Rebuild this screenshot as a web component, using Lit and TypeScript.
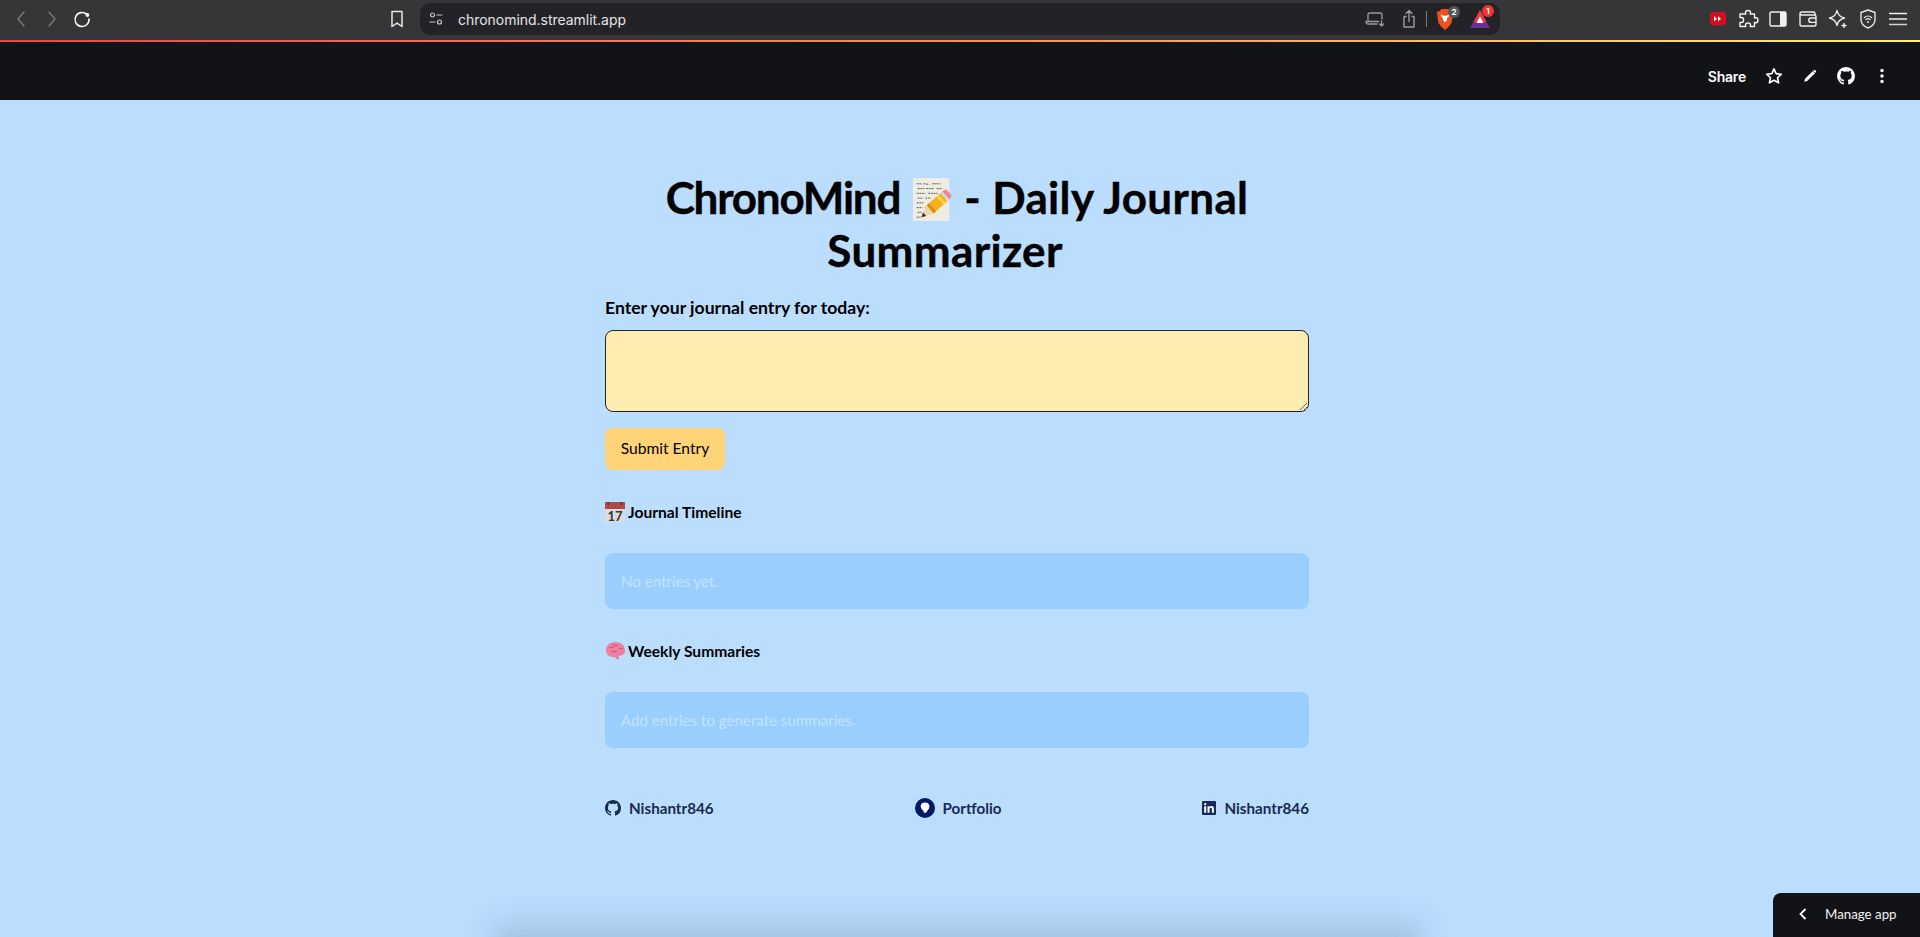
import { LitElement, html, css, svg } from "lit";
import { customElement } from "lit/decorators.js";

const githubPath = "M8 0C3.58 0 0 3.58 0 8c0 3.54 2.29 6.53 5.47 7.59.4.07.55-.17.55-.38 0-.19-.01-.82-.01-1.49-2.01.37-2.53-.49-2.69-.94-.09-.23-.48-.94-.82-1.13-.28-.15-.68-.52-.01-.53.63-.01 1.08.58 1.23.82.72 1.21 1.87.87 2.33.66.07-.52.28-.87.51-1.07-1.78-.2-3.64-.89-3.64-3.95 0-.87.31-1.59.82-2.15-.08-.2-.36-1.02.08-2.12 0 0 .67-.21 2.2.82.64-.18 1.32-.27 2-.27s1.36.09 2 .27c1.53-1.04 2.2-.82 2.2-.82.44 1.1.16 1.92.08 2.12.51.56.82 1.27.82 2.15 0 3.07-1.87 3.75-3.65 3.95.29.25.54.73.54 1.48 0 1.07-.01 1.93-.01 2.2 0 .21.15.46.55.38A8.01 8.01 0 0 0 16 8c0-4.42-3.58-8-8-8z";

const chromeIcon = (body: unknown, vb = "0 0 24 24", w = 24, h = 24) =>
  html`<svg class="ic" width=${w} height=${h} viewBox=${vb} fill="none">${body}</svg>`;

@customElement("app-root")
export class AppRoot extends LitElement {
  static styles = css`
    :host {
      display: flex;
      flex-direction: column;
      position: relative;
      height: 937px;
      overflow: hidden;
      background: #bbdeff;
      font-family: "Lato", "Noto Sans", sans-serif;
      color: #000;
    }
    .ic { display: block; flex: none; }
    .chrome {
      flex: 0 0 40px;
      box-sizing: border-box;
      padding-bottom: 2px;
      display: flex;
      align-items: center;
      background: #363638;
    }
    .nav {
      flex: 0 0 409px;
      display: flex;
      align-items: center;
      gap: 6.5px;
      padding-left: 9px;
      box-sizing: border-box;
    }
    .nav .mark { margin-left: auto; }
    .address {
      flex: 0 0 1080px;
      margin-left: 11px;
      height: 32px;
      box-sizing: border-box;
      border-radius: 10px;
      background: #232327;
      display: flex;
      align-items: center;
      padding: 0 8px 0 8px;
      color: #e3e3e6;
      font: 400 13.95px "Inter", sans-serif;
    }
    .url { margin-left: 14px; }
    .addr-right {
      margin-left: auto;
      display: flex;
      align-items: center;
    }
    .gap-a { width: 10px; }
    .gap-b { width: 11px; }
    .divider { width: 1px; height: 16px; background: #77777b; margin: 0 6px 0 5px; }
    .ext {
      margin-left: auto;
      padding-right: 10px;
      display: flex;
      align-items: center;
      gap: 6px;
    }
    .progress {
      flex: 0 0 2px;
      background: linear-gradient(90deg, #f2404c 0%, #ff6a50 25%, #ff8a55 50%, #ffb560 72%, #ffef72 100%);
    }
    .appbar {
      flex: 0 0 58px;
      box-sizing: border-box;
      padding: 10px 28px 0 0;
      background: #111317;
      display: flex;
      align-items: center;
      justify-content: flex-end;
      color: #fff;
    }
    .share { font: 600 14px "Inter", sans-serif; margin-right: 18px; letter-spacing: -0.2px; }
    .tools { display: flex; align-items: center; gap: 16px; }
    .body {
      flex: 1;
      padding-right: 6px;
    }
    .main {
      display: flex;
      flex-direction: column;
      width: 704px;
      margin: 0 auto;
      padding-top: 71px;
    }
    h1 {
      margin: 0 0 19px;
      text-align: center;
      font: 700 44px/53px "Lato", sans-serif;
      letter-spacing: 0.35px;
      -webkit-text-stroke: 0.4px #000;
    }
    .tight { letter-spacing: -1.2px; }
    .anchor { display: inline-block; width: 24px; height: 1px; }
    .emoji-title { display: inline-block; vertical-align: -9px; margin: 0 1px; }
    label { display: block; font: 700 17.6px/24px "Lato", sans-serif; margin-bottom: 10px; }
    textarea {
      display: block;
      width: 100%;
      height: 82px;
      box-sizing: border-box;
      border: 1px solid #1e2433;
      border-radius: 8px;
      background: #ffecb0;
      margin: 0 0 16px;
      outline: none;
    }
    .submit {
      align-self: flex-start;
      width: 120px;
      height: 42px;
      border: 0;
      border-radius: 8px;
      background: #ffd377;
      color: #000;
      font: 400 15.6px "Lato", sans-serif;
      padding: 0 0 2px;
    }
    h3 {
      margin: 30px 0 29px;
      display: flex;
      align-items: center;
      gap: 3px;
      height: 24px;
      font: 700 15.6px/24px "Lato", sans-serif;
    }
    .info {
      height: 56px;
      box-sizing: border-box;
      display: flex;
      align-items: center;
      padding: 0 16px 1px;
      border-radius: 8px;
      background: #9acefe;
      color: #c0e3ff;
      font: 400 15.1px "Lato", sans-serif;
    }
    .info + h3 { margin-top: 30px; }
    .links {
      display: flex;
      justify-content: space-between;
      align-items: center;
      margin-top: 48px;
      height: 24px;
      color: #1a2a56;
      font: 700 15.2px "Lato", sans-serif;
    }
    .link { display: flex; align-items: center; gap: 8px; }
    .manage {
      position: absolute;
      right: 0;
      bottom: 0;
      width: 147px;
      height: 44px;
      box-sizing: border-box;
      padding: 0 0 2px 23px;
      border-top-left-radius: 8px;
      background: #111317;
      color: #f2f2f2;
      display: flex;
      align-items: center;
      gap: 15px;
      font: 400 13.3px "Lato", sans-serif;
      z-index: 2;
    }
    .glow {
      position: absolute;
      left: 505px;
      width: 905px;
      bottom: -30px;
      height: 30px;
      box-shadow: 0 -2px 30px 12px rgba(40, 60, 90, 0.17);
    }
    .badge {
      position: absolute;
      display: flex;
      align-items: center;
      justify-content: center;
      border-radius: 50%;
      font: 700 8px "Inter", sans-serif;
      color: #fff;
      width: 12px;
      height: 12px;
    }
    .slot { position: relative; width: 24px; height: 24px; flex: none; }
    .b1 { background: #55565e; right: -3px; top: -1px; }
    .b2 { background: #f0352c; right: -2px; top: -2px; }
  `;

  render() {
    const st = "stroke-linecap:round;stroke-linejoin:round";
    return html`
      <div class="chrome">
        <div class="nav">
          ${chromeIcon(svg`<path d="M15 5l-6 7 6 7" stroke="#77777a" stroke-width="1.5" style=${st}/>`)}
          ${chromeIcon(svg`<path d="M9 5l6 7-6 7" stroke="#77777a" stroke-width="1.5" style=${st}/>`)}
          ${chromeIcon(svg`<path d="M16.8 7.4A7 7 0 1 0 19 12" stroke="#f4f4f4" stroke-width="1.6" style=${st}/><circle cx="17.4" cy="8" r="1.9" fill="#f4f4f4"/>`)}
          <span class="mark">${chromeIcon(svg`<path d="M7 4.5h10v15l-5-3.4-5 3.4z" stroke="#e8e8e8" stroke-width="1.5" style=${st}/>`)}</span>
        </div>
        <div class="address">
          ${chromeIcon(svg`<circle cx="4.5" cy="4" r="2" stroke="#c6c6c8" stroke-width="1.2"/><path d="M8.5 4h6M1.5 11h6" stroke="#c6c6c8" stroke-width="1.2"/><circle cx="11.5" cy="11" r="2" stroke="#c6c6c8" stroke-width="1.2"/>`, "0 0 16 16", 16, 16)}
          <span class="url">chronomind.streamlit.app</span>
          <div class="addr-right">
            ${chromeIcon(svg`<path d="M5 14V7.500A1.500 1.500 0 0 1 6.500 6h11A1.500 1.500 0 0 1 19 7.500V12M3 14.500h12.500M3 14.500c0 1.800.8 2.500 2.300 2.500H14" stroke="#9b9b9e" stroke-width="1.300" style=${st}/><path d="M18.500 14v5M16.500 17l2 2 2-2" stroke="#9b9b9e" stroke-width="1.300" style=${st}/>`)}
            <span class="gap-a"></span>
            ${chromeIcon(svg`<path d="M9 9.500H7v10.500h10V9.500h-2M12 14.500V4M9 6.500L12 3.500l3 3" stroke="#9b9b9e" stroke-width="1.400" style=${st}/>`)}
            <div class="divider"></div>
            <div class="slot">
              ${chromeIcon(svg`<path d="M6 4.500l2.500-2.500h7L18 4.500l2.300.3-.8 4.700-.9 6.500-3.400 4.200L12 23l-3.200-2.800-3.400-4.200-.9-6.500-.8-4.700z" fill="#f0501e"/><path d="M8 7.500l2.500 1.200h3L16 7.500l-.5 2.500-1.500 1v2l-2 2.500-2-2.500v-2l-1.500-1z" fill="#fff"/>`)}
              <span class="badge b1">2</span>
            </div>
            <span class="gap-b"></span>
            <div class="slot">
              ${chromeIcon(svg`<path d="M12 3L22 21H2z" fill="#6d2f94"/><path d="M12 3L18.500 15H5.500z" fill="#ee3a3a"/><path d="M12 9.500L15.500 16H8.500z" fill="#fff"/>`)}
              <span class="badge b2">1</span>
            </div>
          </div>
        </div>
        <div class="ext">
          ${chromeIcon(svg`<rect x="4" y="5" width="16" height="13.500" rx="3.500" fill="#d40e22"/><path d="M8 9.200l3 2.500-3 2.500zM12 9.200l3 2.500-3 2.500z" fill="#fff"/>`)}
          ${chromeIcon(svg`<path d="M9.500 5.500c0-2.600 5-2.600 5 0 0 .8-.3 1-.3 1.500h4.300v4c.5 0 .8-.3 1.500-.3 2.600 0 2.600 5 0 5-.7 0-1-.3-1.500-.3v4.100h-4.300c0-.6.300-.9.300-1.600 0-2.600-5-2.600-5 0 0 .7.3 1 .3 1.600H4v-4.300c.6 0 .9.300 1.600.300 2.600 0 2.600-5 0-5-.7 0-1 .3-1.600.3V7h5.800c0-.5-.3-.7-.3-1.500z" stroke="#f0f0f0" stroke-width="1.400" style=${st}/>`)}
          ${chromeIcon(svg`<rect x="4" y="5" width="16" height="14" rx="1.500" stroke="#f0f0f0" stroke-width="1.400"/><rect x="14" y="5" width="6" height="14" fill="#f0f0f0"/>`)}
          ${chromeIcon(svg`<path d="M19 8V6.500A1.500 1.500 0 0 0 17.500 5H6a2 2 0 0 0-2 2v10.500A1.500 1.500 0 0 0 5.500 19h13a1.500 1.500 0 0 0 1.500-1.500V9.500A1.500 1.500 0 0 0 18.500 8H4.500" stroke="#f0f0f0" stroke-width="1.400" style=${st}/><path d="M20 11h-5a2.200 2.200 0 0 0 0 4.400h5" stroke="#f0f0f0" stroke-width="1.400"/>`)}
          ${chromeIcon(svg`<path d="M11 3.500c.7 4.200 2.800 6.300 7.500 7.500-4.700 1.200-6.800 3.300-7.500 7.500-.7-4.200-2.800-6.300-7.500-7.500 4.700-1.200 6.800-3.300 7.500-7.500z" stroke="#f0f0f0" stroke-width="1.400" style=${st}/><path d="M18 16v5M15.500 18.500h5" stroke="#f0f0f0" stroke-width="1.400"/>`)}
          ${chromeIcon(svg`<path d="M12 3l7 2.500v7c0 4-3 7-7 8.500-4-1.500-7-4.500-7-8.500v-7z" stroke="#e6e6e6" stroke-width="1.400" style=${st}/><path d="M8.500 10.500a5 5 0 0 1 7 0M10 12.500a3 3 0 0 1 4 0" stroke="#e6e6e6" stroke-width="1.300" style=${st}/><circle cx="12" cy="15" r="1" fill="#e6e6e6"/>`)}
          ${chromeIcon(svg`<path d="M3 6.500h18M3 12h18" stroke="#f0f0f0" stroke-width="1.500"/><path d="M3 17.500h18" stroke="#d0d0d0" stroke-width="1.500"/>`)}
        </div>
      </div>
      <div class="progress"></div>
      <div class="appbar">
        <span class="share">Share</span>
        <div class="tools">
          <svg class="ic" width="20" height="20" viewBox="0 0 24 24"><path d="M12 3.500l2.600 5.700 6.200.7-4.600 4.200 1.300 6.100-5.500-3.100-5.500 3.100 1.300-6.100L3.200 9.900l6.200-.7z" fill="none" stroke="#fff" stroke-width="2" stroke-linejoin="round"/></svg>
          <svg class="ic" width="20" height="20" viewBox="-2 -2 28 28"><path d="M4 20l1-4L16 5l3 3L8 19zM17.200 3.800a1.500 1.500 0 0 1 2.100 0l.9.900a1.500 1.500 0 0 1 0 2.100l-.8.800-3-3z" fill="#fff"/></svg>
          <svg class="ic" width="20" height="20" viewBox="-1 -1 18 18"><path d=${githubPath} fill="#fff"/></svg>
          <svg class="ic" width="20" height="20" viewBox="0 0 20 20"><circle cx="10" cy="4.500" r="1.700" fill="#fff"/><circle cx="10" cy="10" r="1.700" fill="#fff"/><circle cx="10" cy="15.500" r="1.700" fill="#fff"/></svg>
        </div>
      </div>
      <div class="body">
        <main class="main">
          <h1><span class="tight">ChronoMind</span> <svg class="emoji-title" width="40" height="46" viewBox="0 0 42 46">
              <rect x="1" y="0" width="38" height="45" fill="#efece4"/>
              <path d="M5 6h5M12 6l6 .5M21 6h9M6 11h7M15 11h8M26 11h6M5 16h9M17 16h10M6 21h5M14 21h6M5 26h7M5 31h6M14 31h4M6 36h4M5 41h4" stroke="#55534f" stroke-width="1" stroke-dasharray="2 .8"/>
              <path d="M29.800 15.900L37.200 24.100 22.700 37.100 15.300 28.900z" fill="#f5b21f"/>
              <path d="M25.700 19.600L33.100 27.800 35.100 26 27.700 17.800z" fill="#ffd54a"/>
              <path d="M18 26.500L25.400 34.700 22.700 37.100 15.300 28.900z" fill="#e08e12"/>
              <path d="M15.300 28.900L22.700 37.100 10 41z" fill="#f3d6a9"/>
              <path d="M10 41l1.500-5 3.500 3.700z" fill="#3a342c"/>
              <path d="M29.800 15.900l3.200-2.900c1.300-1.200 3-1.200 4.200 0l3.300 3.600c1.200 1.300 1 3-.2 4.200l-3.100 3.300z" fill="#ee8796"/>
              <path d="M29.800 15.900l2.200-2 7.400 8.200-2.200 2z" fill="#d9d5cc"/>
            </svg> <span>- Daily Journal</span> <span>Summarizer</span><span class="anchor"></span></h1>
          <label>Enter your journal entry for today:</label>
          <textarea aria-label="journal entry"></textarea>
          <button class="submit">Submit Entry</button>
          <h3>
            <svg class="ic" width="20" height="20" viewBox="0 0 20 20">
              <rect width="20" height="20" fill="#dcdcdc"/>
              <rect width="20" height="7" fill="#b04a48"/>
              <path d="M2.500 0h2v3h-2zM15.500 0h2v3h-2z" fill="#7d2d2d"/>
              <text x="10" y="18.500" font-size="13" text-anchor="middle" fill="#333" font-family="Lato">17</text>
            </svg>
            Journal Timeline
          </h3>
          <div class="info">No entries yet.</div>
          <h3>
            <svg class="ic" width="20" height="20" viewBox="0 0 20 20">
              <path d="M1 9c0-4.500 4-8 9.500-8C16 1 20 4.500 20 9.500c0 3-2 5-5 5-1 0-1.500.5-1 2.500.3 1.500-1.500 2-2.500 1L10 16c-5 1-9-2.500-9-7z" fill="#ee7f9f"/>
              <path d="M4 7c2-1 3 0 5-1M8 3c1 2 3 2 5 1M6 11c2-1 4 0 6-1M14 7c1 1 3 1 4 0" stroke="#c84f75" fill="none"/>
            </svg>
            Weekly Summaries
          </h3>
          <div class="info">Add entries to generate summaries.</div>
          <div class="links">
            <span class="link">
              <svg class="ic" width="16" height="16" viewBox="0 0 16 16"><path d=${githubPath} fill="#1a2a56"/></svg>
              Nishantr846
            </span>
            <span class="link">
              <svg class="ic" width="20" height="20" viewBox="0 0 20 20"><circle cx="10" cy="10" r="10" fill="#001a66"/><path d="M10 4.500c2.800 0 4.600 1.600 4.400 4.200-.1 2.600-1.900 3.300-2.600 5-.3.800-1.600 1.500-2.500 1.100-.5-.2-.7-1.200-.9-1.800-.7-1.400-2.600-2-2.700-4.500C5.600 6 7.200 4.500 10 4.500z" fill="#fff"/></svg>
              Portfolio
            </span>
            <span class="link">
              <svg class="ic" width="14" height="14" viewBox="0 0 14 14"><rect width="14" height="14" rx="1" fill="#14295e"/><path d="M2.200 5.300h2v6.500h-2zM5.500 5.300h1.900v.9c.4-.6 1.100-1.100 2.100-1.100 2 0 2.400 1.300 2.400 3v3.700h-2V8.500c0-.8-.1-1.700-1.100-1.700-1.100 0-1.300.8-1.300 1.600v3.400h-2z" fill="#fff"/><circle cx="3.200" cy="3.200" r="1.150" fill="#fff"/></svg>
              Nishantr846
            </span>
          </div>
        </main>
      </div>
      <div class="glow"></div>
      <div class="manage">
        <svg class="ic" width="14" height="14" viewBox="0 0 14 14"><path d="M9.500 2L4.500 7l5 5" fill="none" stroke="#fff" stroke-width="1.800"/></svg>
        Manage app
      </div>
    `;
  }
}
